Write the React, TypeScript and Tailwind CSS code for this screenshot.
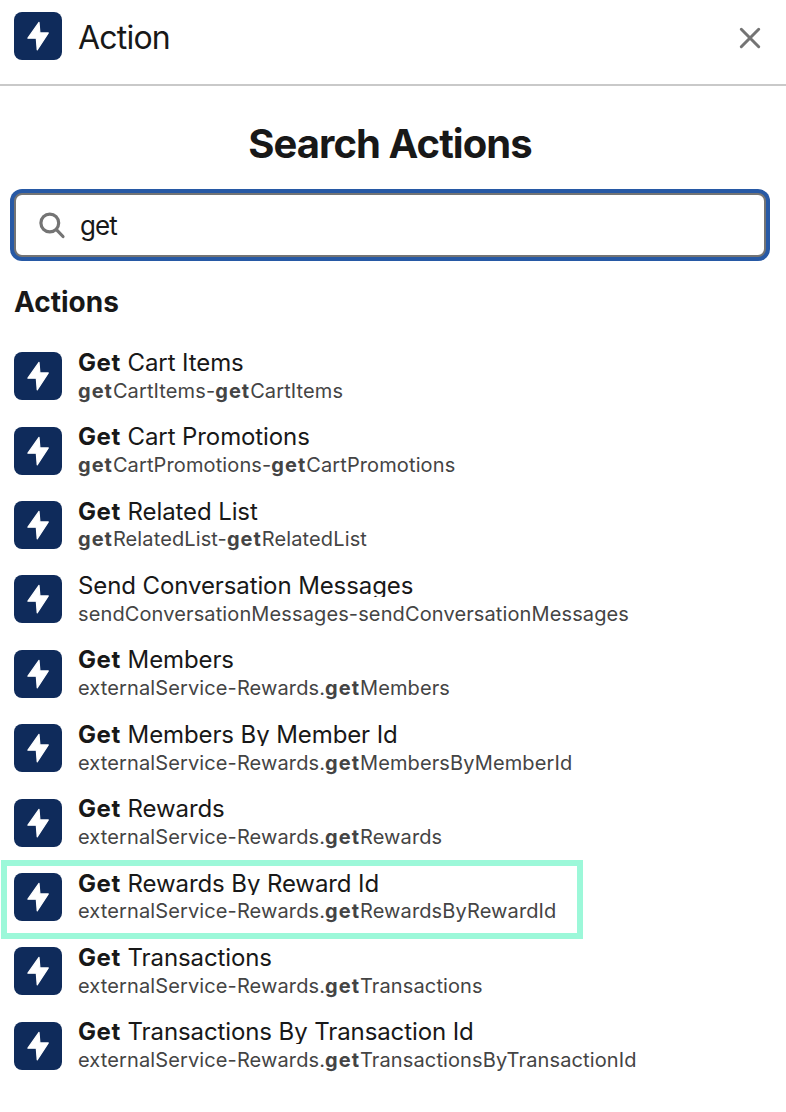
import { Fragment } from 'react';

type Item = { title: string; sub: string; highlighted?: boolean };

const items: Item[] = [
  { title: '*Get* Cart Items', sub: '*get*CartItems-*get*CartItems' },
  { title: '*Get* Cart Promotions', sub: '*get*CartPromotions-*get*CartPromotions' },
  { title: '*Get* Related List', sub: '*get*RelatedList-*get*RelatedList' },
  { title: 'Send Conversation Messages', sub: 'sendConversationMessages-sendConversationMessages' },
  { title: '*Get* Members', sub: 'externalService-Rewards.*get*Members' },
  { title: '*Get* Members By Member Id', sub: 'externalService-Rewards.*get*MembersByMemberId' },
  { title: '*Get* Rewards', sub: 'externalService-Rewards.*get*Rewards' },
  { title: '*Get* Rewards By Reward Id', sub: 'externalService-Rewards.*get*RewardsByRewardId', highlighted: true },
  { title: '*Get* Transactions', sub: 'externalService-Rewards.*get*Transactions' },
  { title: '*Get* Transactions By Transaction Id', sub: 'externalService-Rewards.*get*TransactionsByTransactionId' },
];

function Marked({ text, markClass }: { text: string; markClass: string }) {
  return (
    <>
      {text.split('*').map((part, i) =>
        i % 2 ? <strong key={i} className={markClass}>{part}</strong> : <Fragment key={i}>{part}</Fragment>,
      )}
    </>
  );
}

function BoltIcon() {
  return (
    <span className="block size-12 shrink-0 rounded-lg bg-[#0f2b5b]">
      <svg viewBox="0 0 48 48" className="size-12" fill="#fff" stroke="#fff" strokeWidth="1.2" strokeLinejoin="round">
        <path d="M25 10.4 13.9 26.2H22.3L23.2 37.8 34.3 20.9H25.9Z" />
      </svg>
    </span>
  );
}

export default function App() {
  return (
    <div className="h-[1112px] w-[786px] overflow-hidden bg-white font-['Inter',sans-serif] text-[#181818]">
      <header className="flex h-[86px] items-start border-b-2 border-[#c9c9c9] pl-3.5 pr-[25px] pt-3">
        <BoltIcon />
        <h1 className="ml-4 flex-1 text-[32px] leading-[51px] tracking-[-0.8px]">Action</h1>
        <button aria-label="Close" className="mt-[15px]">
          <svg viewBox="0 0 22 22" className="size-[22px]" fill="none" stroke="#747474" strokeWidth="3" strokeLinecap="round">
            <path d="M2.3 2.3 19.7 19.7M19.7 2.3 2.3 19.7" />
          </svg>
        </button>
      </header>
      <h2 className="mt-[34px] w-[780px] text-center text-[40px] font-bold leading-[48px] tracking-[-0.93px]">Search Actions</h2>
      <div className="ml-2.5 mt-[21px] h-[72px] w-[760px] rounded-xl bg-[#2759a5] p-1">
        <div className="flex h-16 items-center rounded-lg border-2 border-[#747474] bg-white pl-[22px]">
          <svg viewBox="0 0 28 28" className="size-7" fill="none" stroke="#747474" strokeWidth="3.2" strokeLinecap="round">
            <circle cx="11.8" cy="12" r="8.9" />
            <path d="m18.4 18.6 6.6 6.9" />
          </svg>
          <span className="ml-3.5 pt-0.5 text-[26px] leading-8 tracking-[-0.9px]">get</span>
        </div>
      </div>
      <h3 className="ml-3.5 mt-6 text-[28px] font-bold leading-[35px]">Actions</h3>
      <ul className="mt-[24.2px]">
        {items.map((item) => (
          <li key={item.title} className="relative flex h-[74.4px] items-start pl-3.5 pt-2">
            {item.highlighted && (
              <span className="pointer-events-none absolute left-[1px] top-[-5px] h-[79px] w-[582px] border-[6px] border-[#9cf8d9]" />
            )}
            <BoltIcon />
            <div className="-mt-[4.4px] ml-4">
              <div className="h-[26.4px] overflow-hidden whitespace-nowrap text-2xl leading-[30px] tracking-[-0.1px]">
                <Marked text={item.title} markClass="font-bold tracking-[0.6px]" />
              </div>
              <div className="mt-[4.4px] whitespace-nowrap text-xl leading-6 tracking-[0.12px] text-[#444]">
                <Marked text={item.sub} markClass="font-bold tracking-[1px]" />
              </div>
            </div>
          </li>
        ))}
      </ul>
    </div>
  );
}
